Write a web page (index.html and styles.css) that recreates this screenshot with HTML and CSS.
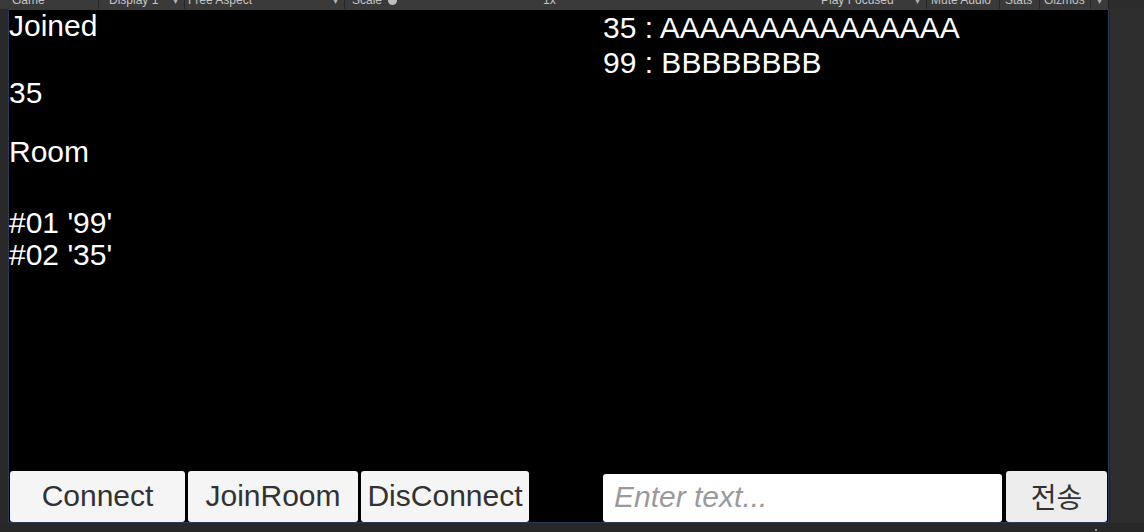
FILE: index.html
```html
<!DOCTYPE html>
<html>
<head>
<meta charset="utf-8">
<link rel="stylesheet" href="styles.css">
</head>
<body>
<div class="toolbar">
  <div class="tb-row">
    <div class="tb-item tb-game">Game</div>
    <div class="tb-item tb-display">Display 1<span class="tb-arrow">▾</span></div>
    <div class="tb-item tb-aspect">Free Aspect<span class="tb-arrow">▾</span></div>
    <div class="tb-item tb-scale">Scale<span class="tb-knob"></span><span class="tb-scale-val">1x</span></div>
    <div class="tb-item tb-play">Play Focused<span class="tb-arrow">▾</span></div>
    <div class="tb-item tb-mute">Mute Audio</div>
    <div class="tb-item tb-stats">Stats</div>
    <div class="tb-item tb-gizmos">Gizmos</div>
    <div class="tb-item tb-gizmo-arrow"><span class="tb-arrow">▾</span></div>
    <div class="tb-rest"></div>
  </div>
</div>
<div class="main">
  <div class="gutter"></div>
  <div class="game">
    <div class="upper">
      <div class="status">
        <div class="line l-joined">Joined</div>
        <div class="line l-id">35</div>
        <div class="line l-room">Room</div>
        <div class="line l-m1">#01 '99'</div>
        <div class="line l-m2">#02 '35'</div>
      </div>
      <div class="chat">
        <div class="chat-line">35 : AAAAAAAAAAAAAAA</div>
        <div class="chat-line">99 : BBBBBBBB</div>
      </div>
    </div>
    <div class="bottom">
      <div class="btn-group">
        <div class="btn b-connect">Connect</div>
        <div class="btn b-join">JoinRoom</div>
        <div class="btn b-dis">DisConnect</div>
      </div>
      <div class="send-group">
        <input class="field" type="text" placeholder="Enter text...">
        <div class="btn b-send">전송</div>
      </div>
    </div>
  </div>
  <div class="side"></div>
</div>
<div class="footer"><span class="dot"></span></div>
</body>
</html>
```

FILE: styles.css
```css
html, body {
  margin: 0;
  padding: 0;
}
body {
  width: 1144px;
  height: 532px;
  overflow: hidden;
  background: #282828;
  font-family: "Liberation Sans", Arial, sans-serif;
}
.toolbar {
  height: 9px;
  overflow: hidden;
  background: #3a3a3a;
}
.tb-row {
  display: flex;
  height: 19px;
  margin-top: -9px;
  font-size: 12px;
  line-height: 19px;
  color: #c4c4c4;
}
.tb-item {
  box-sizing: border-box;
  border-right: 1px solid #262626;
  white-space: nowrap;
  display: flex;
  align-items: center;
  flex: none;
}
.tb-arrow {
  margin-left: auto;
  margin-right: 6px;
  font-size: 10px;
  color: #b0b0b0;
}
.tb-game { width: 99px; padding-left: 12px; }
.tb-display { width: 86px; padding-left: 10px; }
.tb-aspect { width: 160px; padding-left: 3px; }
.tb-scale { width: 470px; padding-left: 7px; border-right: none; }
.tb-knob {
  width: 9px;
  height: 9px;
  border-radius: 50%;
  background: #bdbdbd;
  margin-left: 6px;
}
.tb-scale-val { margin-left: 146px; }
.tb-play { width: 112px; padding-left: 6px; }
.tb-mute { width: 73px; padding-left: 4px; }
.tb-stats { width: 40px; padding-left: 5px; }
.tb-gizmos { width: 51px; padding-left: 4px; }
.tb-gizmo-arrow { width: 18px; border-right: 1px solid #222; }
.tb-rest { flex: 1; background: #2c2c2c; }

.main {
  display: flex;
  height: 514px;
}
.gutter {
  width: 8px;
  background: #292929;
  flex: none;
}
.game {
  box-sizing: border-box;
  width: 1101px;
  height: 514px;
  flex: none;
  background: #000;
  border: 1px solid #2c3a58;
  display: flex;
  flex-direction: column;
  color: #fff;
  font-size: 30px;
}
.upper {
  flex: 1;
  display: flex;
}
.status {
  width: 594px;
  flex: none;
}
.line {
  line-height: 32px;
  height: 32px;
  white-space: nowrap;
}
.l-id { margin-top: 35px; }
.l-room { margin-top: 27px; }
.l-m1 { margin-top: 39px; }
.chat {
  padding-top: 0;
}
.chat-line {
  line-height: 35px;
  white-space: nowrap;
}
.bottom {
  display: flex;
  align-items: flex-end;
  padding-bottom: 0;
}
.btn-group {
  width: 594px;
  flex: none;
  display: flex;
  gap: 3px;
  padding-left: 1px;
  box-sizing: border-box;
}
.btn {
  height: 51px;
  background: #f5f5f5;
  border-radius: 3px;
  color: #323232;
  font-size: 30px;
  display: flex;
  align-items: center;
  justify-content: center;
  white-space: nowrap;
  box-sizing: border-box;
  padding-bottom: 1px;
}
.b-connect { width: 175px; }
.b-join { width: 170px; }
.b-dis { width: 168px; }
.send-group {
  display: flex;
  align-items: flex-end;
  gap: 4px;
}
.field {
  box-sizing: border-box;
  width: 399px;
  height: 48px;
  margin: 0;
  border: none;
  border-radius: 3px;
  background: #fff;
  padding: 0 0 2px 11px;
  font-family: "Liberation Sans", Arial, sans-serif;
  font-size: 30px;
  color: #323232;
  outline: none;
}
.field::placeholder {
  color: #9a9a9a;
  font-style: italic;
}
.b-send {
  width: 101px;
  background: #ededed;
  font-family: "Noto Sans CJK KR", "Liberation Sans", sans-serif;
  font-size: 28px;
}
.side {
  flex: 1;
  background: #2e2e2e;
  border-left: 1px solid #222;
}
.footer {
  height: 9px;
  background: #282828;
  position: relative;
}
.dot {
  position: absolute;
  left: 1095px;
  top: 6px;
  width: 2px;
  height: 2px;
  background: #9a9a9a;
}
```
